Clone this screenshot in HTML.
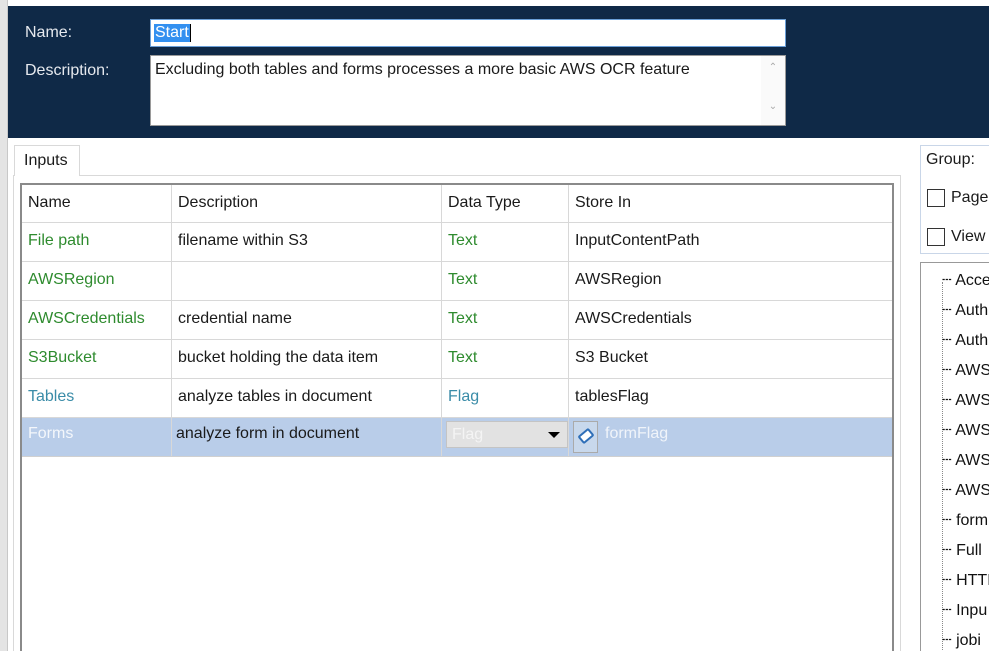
<!DOCTYPE html>
<html><head><meta charset="utf-8"><style>
*{margin:0;padding:0;box-sizing:border-box}
html,body{width:989px;height:651px;overflow:hidden}
body{background:#fff;position:relative;font-family:"Liberation Sans",Arial,sans-serif;font-size:16px;color:#1a1a1a}
.a{position:absolute}
.navy{left:8px;top:6px;width:981px;height:132px;background:#0f2947}
.lbl{color:#e6e9ee;font-size:16px}
.grid{left:20px;top:183px;width:874px;height:470px;border:2px solid #8a8a8a;background:#fff}
.row{position:absolute;left:0;width:870px;height:39px;border-bottom:1px solid #d8d8d8}
.c{position:absolute;top:0;height:100%;line-height:36px;padding-left:6px;border-right:1px solid #d8d8d8;white-space:nowrap;overflow:hidden}
.c1{left:0;width:150px}.c2{left:150px;width:270px}.c3{left:420px;width:127px}.c4{left:547px;width:323px;border-right:none}
.g{color:#2e8b2e}.t{color:#3a8ca8}
.tree{font-size:16px;color:#111;white-space:nowrap;width:200px}
</style></head><body>
<div class="a" style="left:0;top:0;width:8px;height:651px;background:#e4e4e4;border-right:1px solid #c8c8c8"></div>
<div class="a navy"></div>
<div class="a lbl" style="left:25px;top:24px">Name:</div>
<div class="a lbl" style="left:25px;top:62px">Description:</div>
<div class="a" style="left:150px;top:19px;width:636px;height:28px;background:#fff;border:1px solid #6a9fd8"><span style="position:absolute;left:3px;top:4px;background:#3390f0;color:#fff;padding:0 1px;line-height:18px">Start</span><span style="position:absolute;left:39px;top:4px;width:1px;height:18px;background:#000"></span></div>
<div class="a" style="left:150px;top:55px;width:636px;height:71px;background:#fff;border:1px solid #9a9a9a"><div style="position:absolute;left:4px;top:5px">Excluding both tables and forms processes a more basic AWS OCR feature</div>
<div style="position:absolute;right:0;top:0;width:24px;height:69px;background:#fafafa;color:#aaa;font-size:10px;text-align:center"><div style="margin-top:6px">&#8963;</div><div style="margin-top:28px">&#8964;</div></div></div>
<div class="a" style="left:13px;top:175px;width:888px;height:480px;border:1px solid #d9d9d9;background:#fff"></div>
<div class="a" style="left:14px;top:145px;width:66px;height:31px;border:1px solid #d9d9d9;border-bottom:none;background:#fff;padding:6px 0 0 9px">Inputs</div>
<div class="a grid">
<div class="row" style="top:0;height:38px"><div class="c c1">Name</div><div class="c c2">Description</div><div class="c c3">Data Type</div><div class="c c4">Store In</div></div>
<div class="row" style="top:38px"><div class="c c1 g">File path</div><div class="c c2">filename within S3</div><div class="c c3 g">Text</div><div class="c c4">InputContentPath</div></div>
<div class="row" style="top:77px"><div class="c c1 g">AWSRegion</div><div class="c c2"></div><div class="c c3 g">Text</div><div class="c c4">AWSRegion</div></div>
<div class="row" style="top:116px"><div class="c c1 g">AWSCredentials</div><div class="c c2">credential name</div><div class="c c3 g">Text</div><div class="c c4">AWSCredentials</div></div>
<div class="row" style="top:155px"><div class="c c1 g">S3Bucket</div><div class="c c2">bucket holding the data item</div><div class="c c3 g">Text</div><div class="c c4">S3 Bucket</div></div>
<div class="row" style="top:194px"><div class="c c1 t">Tables</div><div class="c c2">analyze tables in document</div><div class="c c3 t">Flag</div><div class="c c4">tablesFlag</div></div>
<div class="row" style="top:233px;background:#b9cde9;border-bottom:1px solid #d0d0d0"><div class="c c1" style="color:#f4f7fb;line-height:32px">Forms</div><div class="c c2" style="line-height:32px;padding-left:4px">analyze form in document</div><div class="c c3" style="padding:0">
<div style="position:absolute;left:4px;top:3px;width:122px;height:27px;background:#e2e2e2;border:1px solid #c4c4c4;color:#f4f4f4;line-height:25px;padding-left:5px">Flag<span style="position:absolute;right:7px;top:10px;width:0;height:0;border-left:6px solid transparent;border-right:6px solid transparent;border-top:6px solid #000"></span></div></div>
<div class="c c4" style="padding:0"><div style="position:absolute;left:4px;top:3px;width:25px;height:32px;border:1px solid #aaa;background:#c8d8ec"><div style="position:absolute;left:5px;top:9px;width:14px;height:10px;background:#fff;border:2px solid #2f6fb8;border-radius:2px;transform:rotate(-40deg)"></div></div><span style="position:absolute;left:36px;top:0;color:#f0f4fa;line-height:32px">formFlag</span></div></div>
</div>
<div class="a" style="left:920px;top:145px;width:80px;height:109px;border:1px solid #c9d6e8"></div>
<div class="a" style="left:926px;top:151px">Group:</div>
<div class="a" style="left:927px;top:189px;width:18px;height:18px;border:1px solid #333;background:#fff"></div>
<div class="a" style="left:951px;top:189px">Page</div>
<div class="a" style="left:927px;top:228px;width:18px;height:18px;border:1px solid #333;background:#fff"></div>
<div class="a" style="left:951px;top:228px">View</div>
<div class="a" style="left:920px;top:262px;width:80px;height:400px;border:1px solid #999"></div>
<div class="a" style="left:942px;top:282px;width:0;height:370px;border-left:1px dotted #888"></div>
<div class="a tree" style="left:942px;top:266px;line-height:30px">
<div>┄ Acce</div><div>┄ Auth</div><div>┄ Auth</div><div>┄ AWS</div><div>┄ AWS</div><div>┄ AWS</div><div>┄ AWS</div><div>┄ AWS</div><div>┄ form</div><div>┄ Full</div><div>┄ HTTI</div><div>┄ Inpu</div><div>┄ jobi</div>
</div>
</body></html>
